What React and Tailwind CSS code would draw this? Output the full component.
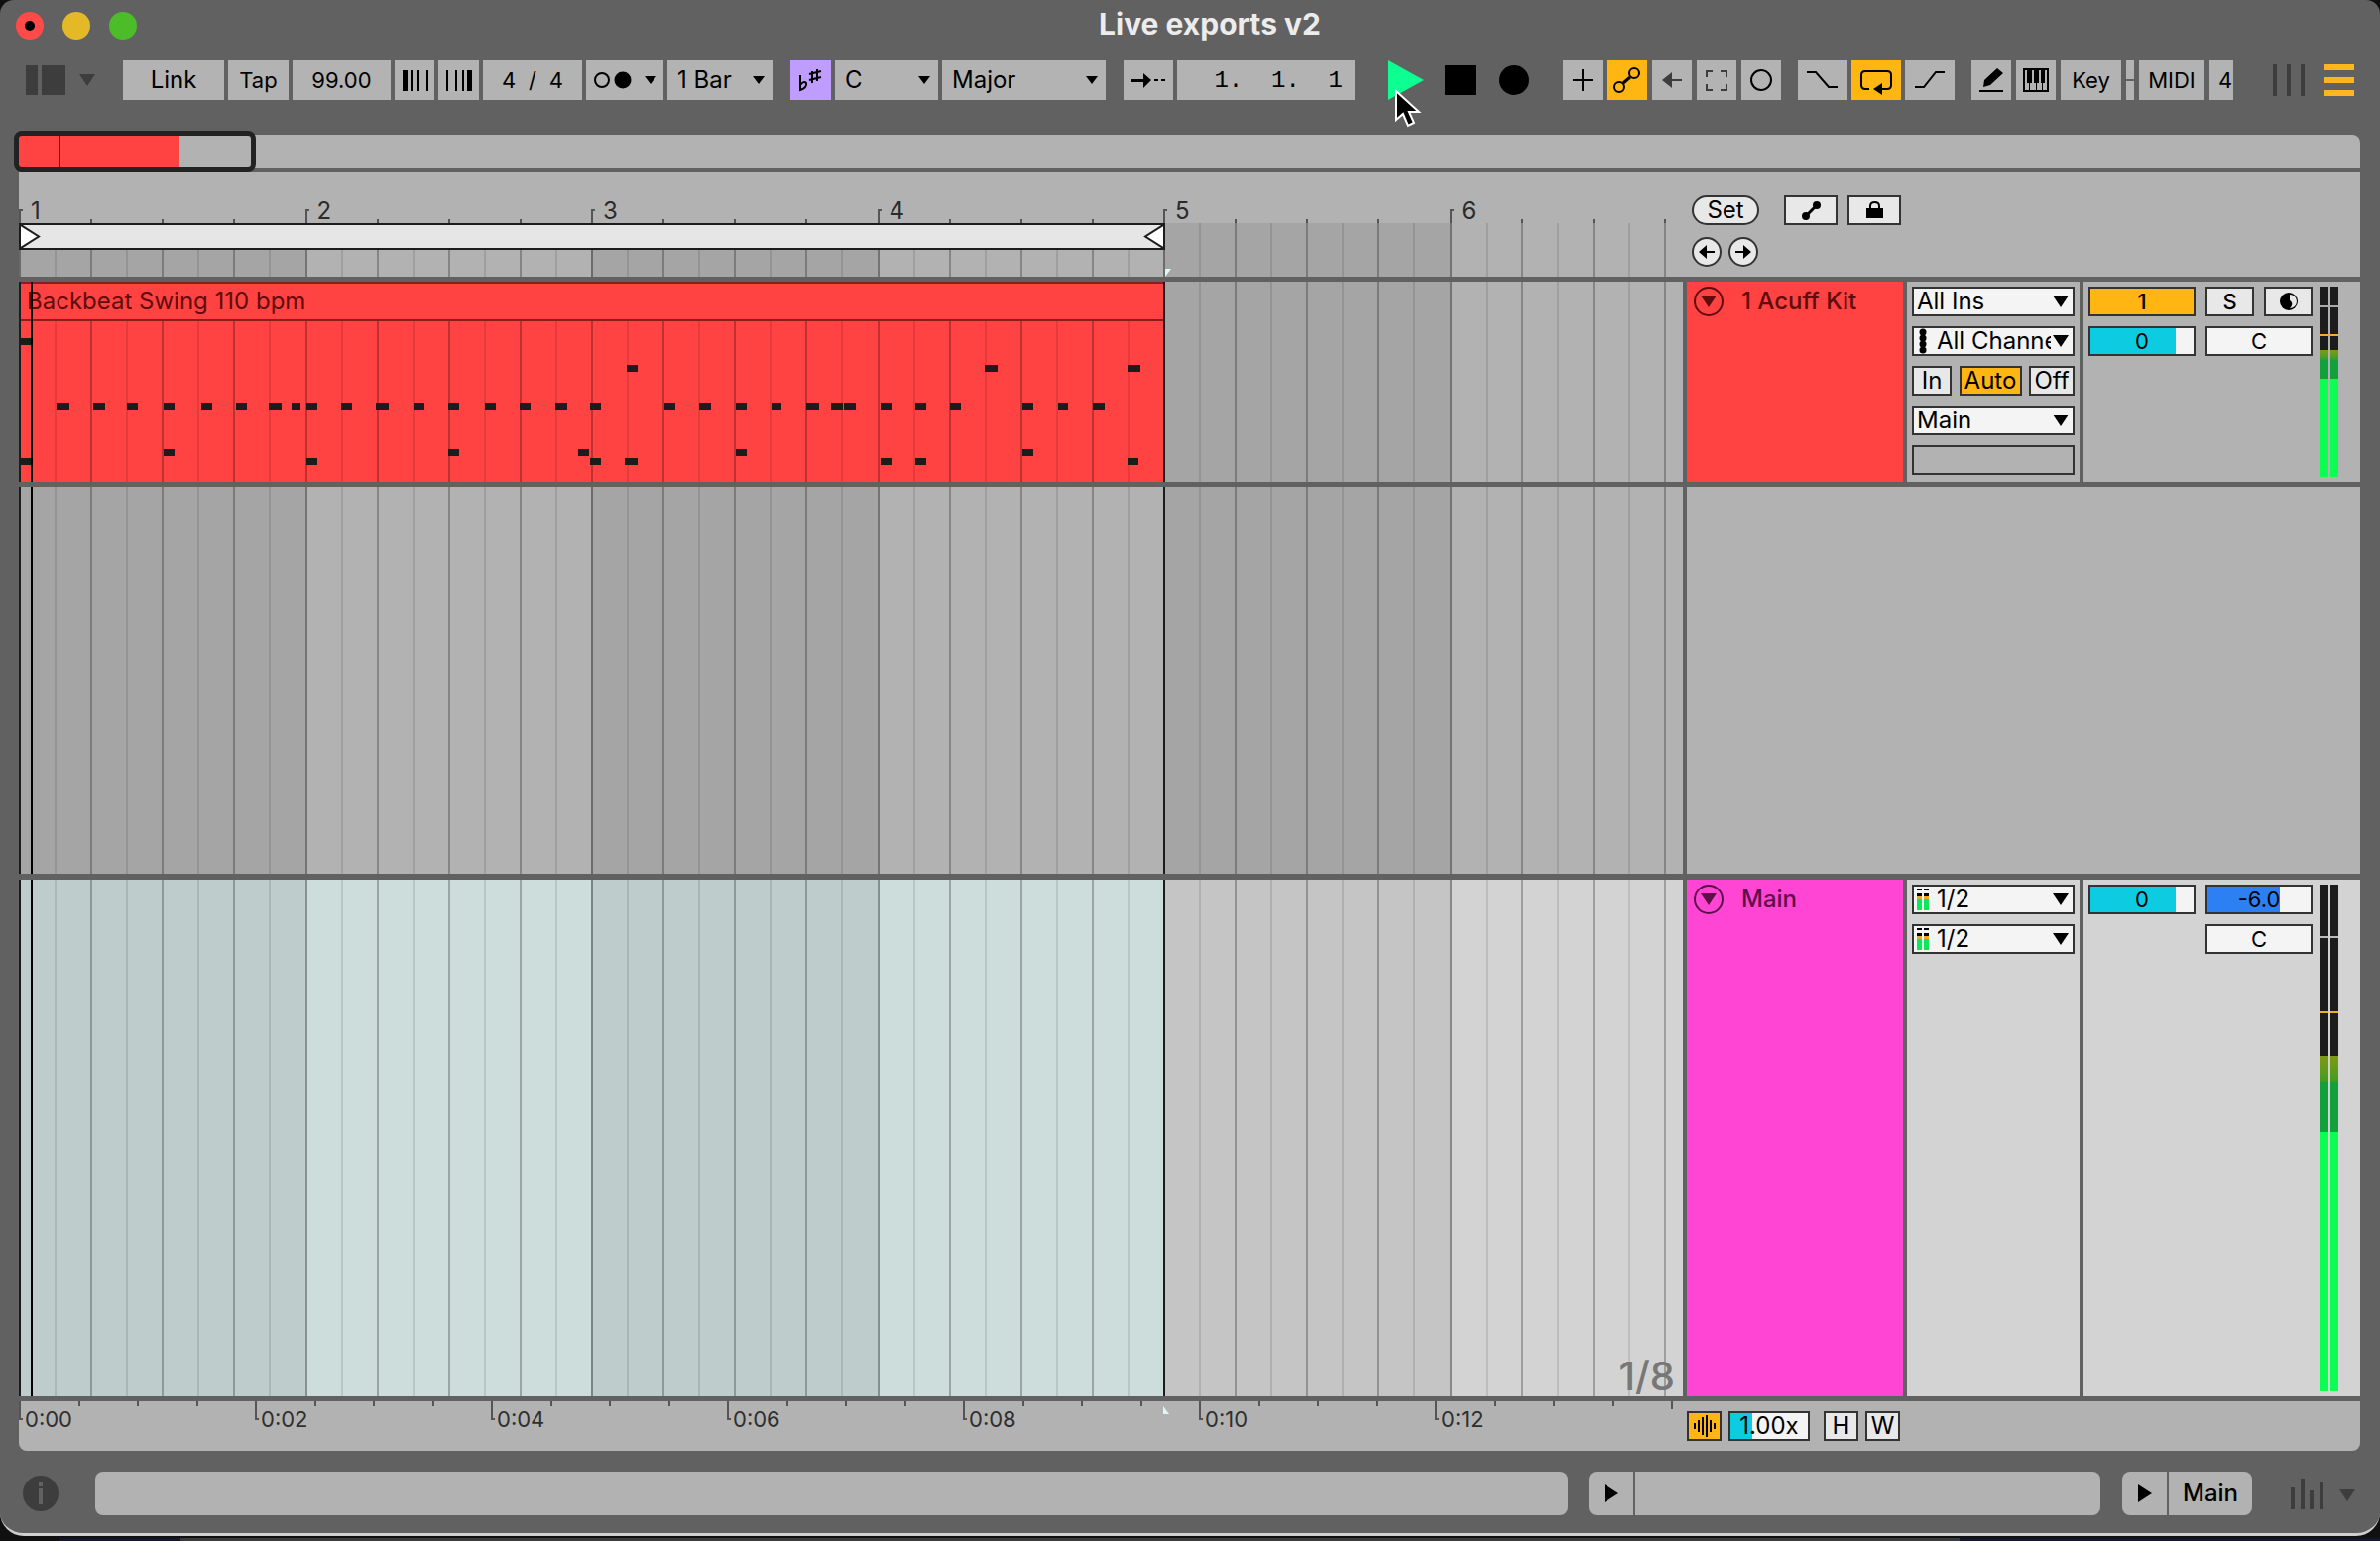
import React, { useState } from "react";
import clsx from "clsx";

const BARS = [1, 2, 3, 4, 5, 6];
const TIMES = ["0:00", "0:02", "0:04", "0:06", "0:08", "0:10", "0:12", ""];

// midi notes of the clip: [x, y, width]
const NOTES = [
  [0, 56, 12],
  [613, 83, 11], [974, 83, 13], [1118, 83, 13],
  [38, 121, 13], [75, 121, 12], [109, 121, 11], [146, 121, 11], [184, 121, 11],
  [219, 121, 11], [252, 121, 13], [275, 121, 9], [290, 121, 11], [325, 121, 11],
  [360, 121, 13], [398, 121, 11], [433, 121, 11], [470, 121, 11], [505, 121, 11],
  [541, 121, 12], [576, 121, 11], [651, 121, 11], [686, 121, 12], [723, 121, 11],
  [759, 121, 10], [794, 121, 13], [819, 121, 12], [832, 121, 12], [869, 121, 11],
  [904, 121, 11], [939, 121, 11], [1012, 121, 11], [1048, 121, 10], [1083, 121, 12],
  [146, 168, 11], [433, 168, 11], [564, 168, 11], [723, 168, 11], [1012, 168, 11],
  [2, 177, 10], [290, 177, 11], [576, 177, 11], [611, 177, 13], [869, 177, 11],
  [904, 177, 11], [1118, 177, 11],
];

const Triangle = ({ className }) => (
  <svg viewBox="0 0 10 10" preserveAspectRatio="none" className={className} fill="currentColor">
    <path d="M0 0H10L5 10Z" />
  </svg>
);

const ToolButton = ({ label, className, active, children }) => (
  <button
    aria-label={label}
    className={clsx(
      "flex h-10 items-center justify-center overflow-hidden",
      active ? "bg-[#ffb612]" : "bg-[#b3b3b3]",
      className
    )}
  >
    {children}
  </button>
);

const ToolSelect = ({ label, value, className }) => (
  <label className={clsx("relative block h-10 bg-[#b3b3b3] text-2xl", className)}>
    <select aria-label={label} defaultValue={value} className="block h-10 w-full appearance-none bg-transparent pl-2.5 outline-none">
      <option>{value}</option>
    </select>
    <Triangle className="pointer-events-none absolute right-2 top-4 h-2 w-3" />
  </label>
);

const Toolbar = () => {
  const [tempo, setTempo] = useState("99.00");

  return (
    <div className="flex h-10 items-center pl-[26px] pr-[26px] text-[22px] leading-10">
      <button aria-label="Show browser" className="flex w-[98px] items-center text-[#3d3d3d]">
        <span className="mr-1 h-[30px] w-3 bg-current" />
        <span className="mr-3.5 h-[30px] w-6 bg-current" />
        <Triangle className="h-3 w-4" />
      </button>

      <div className="flex gap-1">
        <ToolButton className="w-[102px] text-2xl">Link</ToolButton>
        <ToolButton className="w-[61px]">Tap</ToolButton>
        <input
          aria-label="Tempo"
          value={tempo}
          onChange={(e) => setTempo(e.target.value)}
          className="h-10 w-[99px] bg-[#b3b3b3] text-center outline-none"
        />
        <ToolButton label="Nudge down" className="w-10">
          <svg width="40" height="40">
            <path d="M8 10h5v21H8zM16 10h2v21h-2zM23 10h2v21h-2zM32 10h2v21h-2z" />
          </svg>
        </ToolButton>
        <ToolButton label="Nudge up" className="w-[41px]">
          <svg width="40" height="40">
            <path d="M7 10h2v21H7zM16 10h2v21h-2zM23 10h2v21h-2zM28 10h5v21h-5z" />
          </svg>
        </ToolButton>
        <div className="flex w-[100px] items-center justify-center gap-2 bg-[#b3b3b3]">
          <input aria-label="Beats" defaultValue="4" className="w-6 bg-transparent text-center outline-none" />
          <span>/</span>
          <input aria-label="Beat unit" defaultValue="4" className="w-6 bg-transparent text-center outline-none" />
        </div>
        <ToolButton label="Metronome" className="w-[78px]">
          <svg width="78" height="40">
            <circle cx="16" cy="20" r="7" fill="none" stroke="#000" strokeWidth="2" />
            <circle cx="37" cy="20" r="8.500" />
            <path d="M59 16h12l-6 8z" />
          </svg>
        </ToolButton>
        <ToolSelect label="Quantization" value="1 Bar" className="w-[106px]" />
      </div>

      <div className="ml-[18px] flex gap-1">
        <button aria-label="Scale mode" className="flex h-10 w-[41px] items-center justify-center bg-[#bf9dff]">
          <svg width="41" height="40" fill="none" stroke="#000" strokeWidth="2">
            <path d="M10 15v15c4-1 7-4 6-7-1-2-4-1-6 2" />
            <path d="M22 11v12M27 9v12M19 14l12-3M19 20l12-3" />
          </svg>
        </button>
        <ToolSelect label="Root note" value="C" className="w-[104px]" />
        <ToolSelect label="Scale name" value="Major" className="w-[165px]" />
      </div>

      <div className="ml-[18px] flex gap-1">
        <ToolButton label="Follow" className="w-[50px]">
          <svg width="50" height="40">
            <path d="M8 19h12v-6l8 7-8 8v-6H8zM31 19h4v2h-4zM38 19h4v2h-4z" />
          </svg>
        </ToolButton>
        <input
          aria-label="Position"
          defaultValue="1.  1.  1"
          className="h-10 w-[179px] bg-[#b3b3b3] pr-3 text-right font-['Liberation_Mono',monospace] text-2xl outline-none"
        />
      </div>

      <div className="ml-[34px] flex items-center">
        <button aria-label="Play" className="relative h-10 w-[57px]">
          <svg width="36" height="40"><path d="M0 0L36 20L0 40Z" fill="#0dff92" /></svg>
          <svg width="30" height="42" className="pointer-events-none absolute left-1.5 top-7">
            <path
              d="M2 3V32L9 26L14 38L20 35L15 24L25 24Z"
              fill="#000"
              stroke="#fff"
              strokeWidth="2"
            />
          </svg>
        </button>
        <button aria-label="Stop" className="h-[30px] w-[31px] bg-black" />
        <button aria-label="Record" className="ml-6 h-[30px] w-[30px] rounded-full bg-black" />
      </div>

      <div className="ml-[34px] flex gap-[5px]">
        <ToolButton label="Overdub" className="w-10">
          <svg width="40" height="40"><path d="M10 19h9V9h2v10h9v2h-9v10h-2V21h-9z" /></svg>
        </ToolButton>
        <ToolButton label="Automation arm" active className="w-10">
          <svg width="40" height="40" fill="none" stroke="#000" strokeWidth="2">
            <circle cx="27" cy="13" r="5" />
            <circle cx="12" cy="27" r="5" />
            <path d="M23 17L16 23" strokeWidth="3" />
          </svg>
        </ToolButton>
        <ToolButton label="Re-enable automation" className="w-10">
          <svg width="40" height="40" fill="#3d3d3d"><path d="M10 20l10-8v7h10v2H20v7z" /></svg>
        </ToolButton>
        <ToolButton label="Capture" className="w-10">
          <svg width="40" height="40" fill="none" stroke="#3d3d3d" strokeWidth="2">
            <path d="M10 17v-6h6M24 11h6v6M30 24v6h-6M16 30h-6v-6" />
          </svg>
        </ToolButton>
        <ToolButton label="Session record" className="w-10">
          <svg width="40" height="40" fill="none" stroke="#000" strokeWidth="2">
            <circle cx="20" cy="20" r="10" />
          </svg>
        </ToolButton>
      </div>

      <div className="ml-[17px] flex gap-1">
        <ToolButton label="Punch in" className="w-[50px]">
          <svg width="50" height="40" fill="none" stroke="#000" strokeWidth="2">
            <path d="M9 12h9L31 27h9" />
          </svg>
        </ToolButton>
        <ToolButton label="Loop" active className="w-[50px]">
          <svg width="50" height="40">
            <path d="M18 29h-4q-4 0-4-4V15q0-4 4-4h22q4 0 4 4v10q0 4-4 4h-5" fill="none" stroke="#000" strokeWidth="2" />
            <path d="M22 29l9-6v12z" />
          </svg>
        </ToolButton>
        <ToolButton label="Punch out" className="w-[50px]">
          <svg width="50" height="40" fill="none" stroke="#000" strokeWidth="2">
            <path d="M10 27h9L31 12h9" />
          </svg>
        </ToolButton>
      </div>

      <div className="ml-[17px] flex gap-[5px]">
        <ToolButton label="Draw mode" className="w-10">
          <svg width="40" height="40">
            <path d="M8 30h24v2H8zM12 27l1-7L26 8l6 5L19 25z" />
          </svg>
        </ToolButton>
        <ToolButton label="Computer midi keyboard" className="w-10">
          <svg width="40" height="40">
            <rect x="8" y="9" width="24" height="22" fill="none" stroke="#000" strokeWidth="2" />
            <path d="M11 8h5v15h-5zM18 8h5v15h-5zM25 8h4v15h-4zM13 23h1v8h-1zM20 23h1v8h-1zM26 23h1v8h-1z" />
          </svg>
        </ToolButton>
        <ToolButton className="w-[61px]">Key</ToolButton>
        <div className="flex w-2 flex-col justify-center gap-0.5">
          <span className="h-[19px] bg-[#b3b3b3]" />
          <span className="h-[19px] bg-[#b3b3b3]" />
        </div>
        <ToolButton className="w-[66px]">MIDI</ToolButton>
        <ToolButton label="4 percent cpu" className="w-6 pl-2">4</ToolButton>
      </div>

      <button aria-label="Session view" className="ml-auto flex h-8 gap-2.5 text-[#3d3d3d]">
        <span className="w-1 bg-current" />
        <span className="w-1 bg-current" />
        <span className="w-1 bg-current" />
      </button>
      <button aria-label="Arrangement view" className="ml-5 flex h-8 w-[30px] flex-col justify-between">
        <span className="h-1.5 w-full bg-[#ffb61e]" />
        <span className="h-1.5 w-full bg-[#ffb61e]" />
        <span className="h-1.5 w-full bg-[#ffb61e]" />
      </button>
    </div>
  );
};

const shades = {
  plain: ["bg-[#a5a5a5]", "bg-[#b2b2b2]"],
  main: ["bg-[#c5c5c5]", "bg-[#d3d3d3]"],
  loop: ["bg-[#bfcccc]", "bg-[#cddddc]"],
};

// eighth note grid, every bar is one cell
const BeatGrid = ({ tone = "plain", loopTone }) => (
  <div className="absolute inset-y-0 left-0 grid w-[1731px] grid-cols-6">
    {BARS.map((bar, i) => (
      <div key={bar} className={clsx("grid grid-cols-8", shades[loopTone && i < 4 ? loopTone : tone][i % 2])}>
        {BARS.concat(7, 8).map((n) => (
          <div
            key={n}
            className={clsx("border-l-2", n === 1 ? "border-black/35" : n % 2 ? "border-black/25" : "border-black/10")}
          />
        ))}
      </div>
    ))}
  </div>
);

const LoopEdges = () => (
  <div className="pointer-events-none absolute inset-y-0 left-0 w-[1156px] border-x-2 border-[#1c1c1c]">
    <div className="absolute inset-y-0 left-2.5 w-0.5 bg-black" />
  </div>
);

const RoundButton = ({ label, d }) => (
  <button aria-label={label} className="flex h-[30px] w-[30px] items-center justify-center rounded-full border-2 border-[#333] bg-[#e8e8e8]">
    <svg width="18" height="18"><path d={d} /></svg>
  </button>
);

const Ruler = () => (
  <div className="flex h-[106px] gap-1 bg-[#b2b2b2]">
    <div className="relative min-w-0 flex-1 overflow-hidden">
      <div className="grid h-[52px] w-[1731px] grid-cols-6">
        {BARS.map((bar) => (
          <div key={bar} className="relative pl-3 pt-7 text-2xl leading-6 text-[#2b2b2b]">
            {bar}
            <span className="absolute bottom-0 left-0 h-3.5 w-1 border-l-2 border-t-2 border-[#555]" />
            <div className="absolute inset-x-0 bottom-0 grid h-1 grid-cols-4">
              <span />
              <span className="border-l-2 border-[#555]" />
              <span className="border-l-2 border-[#555]" />
              <span className="border-l-2 border-[#555]" />
            </div>
          </div>
        ))}
      </div>
      <div className="relative h-[54px]">
        <BeatGrid />
        <div className="relative h-[27px] w-[1156px] border-2 border-[#1c1c1c] bg-[#e6e6e6]">
          <svg width="20" height="23" className="absolute left-0 top-0" fill="#fff" stroke="#1c1c1c" strokeWidth="2">
            <path d="M0 0L18 11.500L0 23" />
          </svg>
          <svg width="20" height="23" className="absolute right-0 top-0" fill="#fff" stroke="#1c1c1c" strokeWidth="2">
            <path d="M20 0L2 11.500L20 23" />
          </svg>
        </div>
        <svg width="8" height="8" className="absolute bottom-0 left-[1156px]"><path d="M0 0H6L0 8Z" fill="#dff5f7" /></svg>
      </div>
    </div>
    <div className="w-[679px] pl-[5px] pt-6">
      <div className="flex gap-2.5">
        <button className="mr-[15px] h-[30px] w-[68px] rounded-full border-2 border-[#333] bg-[#e8e8e8] text-2xl leading-6">Set</button>
        <button aria-label="Automation mode" className="h-[30px] w-[54px] border-2 border-[#333] bg-[#e8e8e8]">
          <svg width="50" height="26">
            <circle cx="31" cy="8" r="4" />
            <circle cx="20" cy="19" r="4" />
            <path d="M31 8L20 19" stroke="#000" strokeWidth="3" />
          </svg>
        </button>
        <button aria-label="Lock envelopes" className="h-[30px] w-[54px] border-2 border-[#333] bg-[#e8e8e8]">
          <svg width="50" height="26">
            <path d="M17 11h17v10H17z" />
            <path d="M21 12V9q0-4 4.500-4t4.500 4v3" fill="none" stroke="#000" strokeWidth="2" />
          </svg>
        </button>
      </div>
      <div className="mt-3 flex gap-[7px]">
        <RoundButton label="Previous locator" d="M1 9L9 2V8H17V10H9V16Z" />
        <RoundButton label="Next locator" d="M17 9L9 2V8H1V10H9V16Z" />
      </div>
    </div>
  </div>
);

const Clip = () => (
  <div className="relative flex h-full w-[1154px] flex-col bg-[#ff4242] text-2xl">
    <div className="h-10 border-b-2 border-t-2 border-[#8c1d1d] pl-2 leading-9 text-[#5e0c0c]">
      Backbeat Swing 110 bpm
    </div>
    <div className="relative grid flex-1 grid-cols-4">
      {[1, 2, 3, 4].map((bar) => (
        <div key={bar} className="grid grid-cols-8">
          {BARS.concat(7, 8).map((n) => (
            <div key={n} className={clsx("border-l-2", n % 2 ? "border-black/25" : "border-black/10")} />
          ))}
        </div>
      ))}
    </div>
    <svg className="absolute left-0 top-px" width="1154" height="200" fill="#1c1c1c">
      {NOTES.map(([x, y, w]) => (
        <rect key={`${x}-${y}`} x={x} y={y} width={w} height="7" />
      ))}
    </svg>
  </div>
);

const TrackHeader = ({ name, className }) => (
  <div className={clsx("flex w-[218px] items-start pl-[7px] pt-[5px] text-2xl font-medium leading-[30px]", className)}>
    <button aria-label={`Fold ${name}`} className="mr-[18px] flex h-[30px] w-[30px] items-center justify-center rounded-full border-2 border-current">
      <Triangle className="h-3 w-4" />
    </button>
    {name}
  </div>
);

const IoSelect = ({ label, value, children }) => (
  <label className="relative flex h-[30px] items-center border-2 border-[#333] bg-[#f4f4f4] pl-[3px]">
    {children}
    <select
      aria-label={label}
      defaultValue={value}
      className="mr-[22px] h-[26px] w-0 flex-1 appearance-none overflow-hidden bg-transparent leading-[26px] outline-none"
    >
      <option>{value}</option>
    </select>
    <Triangle className="pointer-events-none absolute right-1 top-[7px] h-3 w-4" />
  </label>
);

const ChannelDots = () => (
  <svg width="20" height="26" className="shrink-0">
    {[4, 10, 16, 22].map((y) => (
      <circle key={y} cx="6" cy={y} r="3.500" />
    ))}
  </svg>
);

const MiniMeter = () => (
  <svg width="20" height="22" className="shrink-0">
    {[0, 7].map((x) => (
      <g key={x}>
        <rect x={x} y="0" width="5" height="2" />
        <rect x={x} y="5" width="5" height="3" />
        <rect x={x} y="8" width="5" height="3" fill="#f0a81c" />
        <rect x={x} y="11" width="5" height="11" fill="#0ce85c" />
      </g>
    ))}
  </svg>
);

const Box = ({ className, children, ...rest }) => (
  <button {...rest} className={clsx("flex h-[30px] items-center justify-center border-2 border-[#333] leading-[26px]", className)}>
    {children}
  </button>
);

// value box with the level shown behind the number
const Level = ({ label, value, fill, color, className }) => (
  <label className={clsx("relative block h-[30px] border-2 border-[#333] bg-[#f4f4f4]", className)}>
    <span className={clsx("absolute inset-y-0 left-0", color)} style={{ width: `${fill}%` }} />
    <input
      aria-label={label}
      defaultValue={value}
      className="relative block h-[26px] w-full bg-transparent text-center leading-[26px] outline-none"
    />
  </label>
);

const Meter = ({ parts }) => (
  <div className="flex gap-0.5">
    {[0, 1].map((n) => (
      <div key={n} className="flex w-2 flex-col">
        {parts.map((part, i) => (
          <span key={i} className={part} />
        ))}
      </div>
    ))}
  </div>
);

const kitMeter = [
  "h-[19px] bg-[#1c1c1c]",
  "h-0.5 bg-[#aaa]",
  "h-[27px] bg-[#1c1c1c]",
  "h-0.5 bg-[#f0b020]",
  "h-3.5 bg-[#1c1c1c]",
  "h-2.5 bg-linear-to-b from-[#7c9a10] to-[#2d9c2d]",
  "h-[19px] bg-[#12a03c]",
  "flex-1 bg-[#0aff50]",
];

const mainMeter = [
  "h-[52px] bg-[#1c1c1c]",
  "h-0.5 bg-[#bbb]",
  "h-[74px] bg-[#1c1c1c]",
  "h-0.5 bg-[#f0b020]",
  "h-[43px] bg-[#1c1c1c]",
  "h-[26px] bg-linear-to-b from-[#7c9a10] to-[#3d9c20]",
  "h-[51px] bg-[#12a03c]",
  "flex-1 bg-[#0aff50]",
];

const KitTrack = () => (
  <div className="flex h-[202px] gap-1">
    <div className="relative min-w-0 flex-1 overflow-hidden">
      <BeatGrid />
      <Clip />
      <LoopEdges />
    </div>
    <TrackHeader name="1 Acuff Kit" className="bg-[#ff4242] text-[#5e0c0c]" />
    <div className="flex w-[174px] flex-col gap-2.5 bg-[#b2b2b2] p-[5px] text-2xl">
      <IoSelect label="Input type" value="All Ins" />
      <IoSelect label="Input channel" value="All Channels">
        <ChannelDots />
      </IoSelect>
      <div className="flex justify-between">
        <Box className="w-10 bg-[#e8e8e8]">In</Box>
        <Box className="w-[63px] bg-[#ffb612]">Auto</Box>
        <Box className="w-[46px] bg-[#e8e8e8]">Off</Box>
      </div>
      <IoSelect label="Output" value="Main" />
      <div className="h-[30px] border-2 border-[#333]" />
    </div>
    <div className="flex w-[279px] gap-2 bg-[#b2b2b2] p-[5px] text-[22px]">
      <div className="flex w-[226px] flex-col gap-2.5">
        <div className="flex justify-between">
          <Box className="w-[108px] bg-[#ffb612] font-medium">1</Box>
          <div className="flex w-[108px] justify-between">
            <Box className="w-[49px] bg-[#e8e8e8] font-medium">S</Box>
            <Box aria-label="Arm" className="w-[49px] bg-[#e8e8e8]">
              <svg width="20" height="20">
                <circle cx="10" cy="10" r="9" />
                <path d="M11 3a7 7 0 0 1 0 14c3-3 3-6 0-8z" fill="#e8e8e8" />
                <circle cx="8" cy="12" r="3" />
              </svg>
            </Box>
          </div>
        </div>
        <div className="flex justify-between">
          <Level label="Volume" value="0" fill={83} color="bg-[#0dcbe0]" className="w-[108px]" />
          <Level label="Pan" value="C" fill={0} className="w-[108px]" />
        </div>
      </div>
      <Meter parts={kitMeter} />
    </div>
  </div>
);

const MainTrack = () => (
  <div className="mt-px flex flex-1 gap-1">
    <div className="relative min-w-0 flex-1">
      <div className="absolute inset-0 overflow-hidden">
        <BeatGrid tone="main" loopTone="loop" />
        <LoopEdges />
      </div>
      <div className="absolute bottom-0 right-2 text-[40px] font-medium leading-10 text-[#777]">1/8</div>
    </div>
    <TrackHeader name="Main" className="bg-[#ff45d4] text-[#5c1049]" />
    <div className="flex w-[174px] flex-col gap-2.5 bg-[#d3d3d3] p-[5px] text-2xl">
      <IoSelect label="Cue out" value="1/2">
        <MiniMeter />
      </IoSelect>
      <IoSelect label="Main out" value="1/2">
        <MiniMeter />
      </IoSelect>
    </div>
    <div className="flex w-[279px] gap-2 bg-[#d3d3d3] p-[5px] text-[22px]">
      <div className="flex w-[226px] flex-col gap-2.5">
        <div className="flex justify-between">
          <Level label="Main volume" value="0" fill={83} color="bg-[#0dcbe0]" className="w-[108px]" />
          <Level label="Cue volume" value="-6.0" fill={70} color="bg-[#2c80f3]" className="w-[108px]" />
        </div>
        <div className="flex justify-end">
          <Level label="Main pan" value="C" fill={0} className="w-[108px]" />
        </div>
      </div>
      <Meter parts={mainMeter} />
    </div>
  </div>
);

const TimeRuler = () => (
  <div className="flex h-[50px] gap-1 rounded-b-lg bg-[#b2b2b2] text-[22px]">
    <div className="relative min-w-0 flex-1 overflow-hidden">
      <div className="grid w-[1904px] grid-cols-8">
        {TIMES.map((time) => (
          <div key={time} className="relative h-[18px]">
            <div className="grid h-[5px] grid-cols-4">
              <span />
              <span className="border-l-2 border-[#555]" />
              <span className="border-l-2 border-[#555]" />
              <span className="border-l-2 border-[#555]" />
            </div>
            <span
              className={clsx(
                "absolute left-0 top-0 border-l-2 border-[#555]",
                time ? "h-[19px] w-1 border-b-2" : "h-2"
              )}
            />
            <span className="absolute left-1.5 top-1 leading-7 text-[#2f2f2f]">{time}</span>
          </div>
        ))}
      </div>
      <svg width="8" height="8" className="absolute left-[1154px] top-[5px]"><path d="M0 0L6 8H0Z" fill="#dff5f7" /></svg>
    </div>
    <div className="flex w-[679px] items-start gap-[7px] pt-2.5 text-2xl">
      <Box aria-label="Show waveform" className="w-[35px] bg-[#ffb612]">
        <svg width="24" height="24">
          <path d="M1 9h2v6H1zM5 6h2v12H5zM9 3h2v18H9zM13 1h2v22h-2zM17 6h2v12h-2zM21 9h2v6h-2z" />
        </svg>
      </Box>
      <Level label="Zoom" value="1.00x" fill={28} color="bg-[#0dcbe0]" className="w-[82px]" />
      <Box className="ml-[7px] w-[35px] bg-[#e8e8e8]">H</Box>
      <Box className="w-[35px] bg-[#e8e8e8]">W</Box>
    </div>
  </div>
);

const PlayIcon = () => (
  <svg width="14" height="18"><path d="M0 0L14 9L0 18Z" /></svg>
);

const StatusBar = () => (
  <div className="mt-[21px] flex h-11 items-center pl-[23px] pr-[25px] text-2xl font-medium">
    <button aria-label="Info" className="mr-[37px]">
      <svg width="36" height="36">
        <circle cx="18" cy="18" r="18" fill="#3d3d3d" />
        <path d="M16 7h4v4h-4zM16 13h4v16h-4z" fill="#616161" />
      </svg>
    </button>
    <div className="h-11 flex-1 rounded-lg bg-[#b2b2b2]" />
    <div className="ml-[21px] flex h-11 w-[516px] gap-0.5">
      <button aria-label="Show clip view" className="flex w-[45px] items-center justify-center rounded-l-lg bg-[#b2b2b2]">
        <PlayIcon />
      </button>
      <div className="flex-1 rounded-r-lg bg-[#b2b2b2]" />
    </div>
    <div className="ml-[22px] flex h-11 w-[131px] gap-0.5">
      <button aria-label="Show device view" className="flex w-[45px] items-center justify-center rounded-l-lg bg-[#b2b2b2]">
        <PlayIcon />
      </button>
      <button className="flex-1 rounded-r-lg bg-[#b2b2b2]">Main</button>
    </div>
    <button aria-label="Meters" className="ml-[39px] flex items-end gap-[15px] text-[#3d3d3d]">
      <svg width="34" height="31" fill="currentColor">
        <path d="M0 9h4v22H0zM10 0h4v31h-4zM19 12h4v19h-4zM29 4h4v27h-4z" />
      </svg>
      <Triangle className="mb-2 h-3 w-4" />
    </button>
  </div>
);

const Overview = () => (
  <div className="relative h-[33px] rounded-t-lg bg-[#b2b2b2]">
    <div className="h-full w-[162px] bg-[#ff4242]" />
    <div className="absolute inset-y-0 left-10 w-0.5 bg-[#1c1c1c]" />
    <div className="absolute -left-[5px] -top-1 h-[41px] w-[244px] rounded-lg border-[5px] border-[#222]" />
  </div>
);

const App = () => {
  return (
    <div className="flex min-h-screen flex-col bg-[#101010] font-['Inter',sans-serif] text-black">
      <div className="flex flex-1 flex-col rounded-b-[24px] rounded-t-[14px] border-b-[3px] border-[#cfcfcf] bg-[#616161] pb-[18px]">
        <div className="relative flex h-[61px] items-start justify-center">
          <div className="absolute left-4 top-3 flex gap-[19px]">
            <button aria-label="Close" className="flex h-7 w-7 items-center justify-center rounded-full bg-[#ff4b47]">
              <span className="h-2.5 w-2.5 rounded-full bg-black" />
            </button>
            <button aria-label="Minimize" className="h-7 w-7 rounded-full bg-[#e3b927]" />
            <button aria-label="Zoom window" className="h-7 w-7 rounded-full bg-[#4cbc28]" />
          </div>
          <h1 className="pl-10 pt-1.5 text-[30px] font-bold leading-9 text-[#ececec]">Live exports v2</h1>
        </div>
        <Toolbar />
        <div className="mt-[35px] flex flex-1 flex-col pl-[19px] pr-5">
          <Overview />
          <div className="mt-1 flex flex-1 flex-col gap-[5px]">
            <Ruler />
            <KitTrack />
            <div className="flex h-[390px] gap-1">
              <div className="relative min-w-0 flex-1 overflow-hidden">
                <BeatGrid />
                <LoopEdges />
              </div>
              <div className="w-[679px] bg-[#b2b2b2]" />
            </div>
            <MainTrack />
            <TimeRuler />
          </div>
        </div>
        <StatusBar />
      </div>
      <div className="flex h-[5px] pt-0.5">
        <div className="w-[60px]" />
        <div className="w-[122px] bg-[#17152c]" />
        <div className="flex-1 bg-[#3a3a3a]" />
        <div className="w-[424px] bg-[#17152c]" />
      </div>
    </div>
  );
};

export default App;
